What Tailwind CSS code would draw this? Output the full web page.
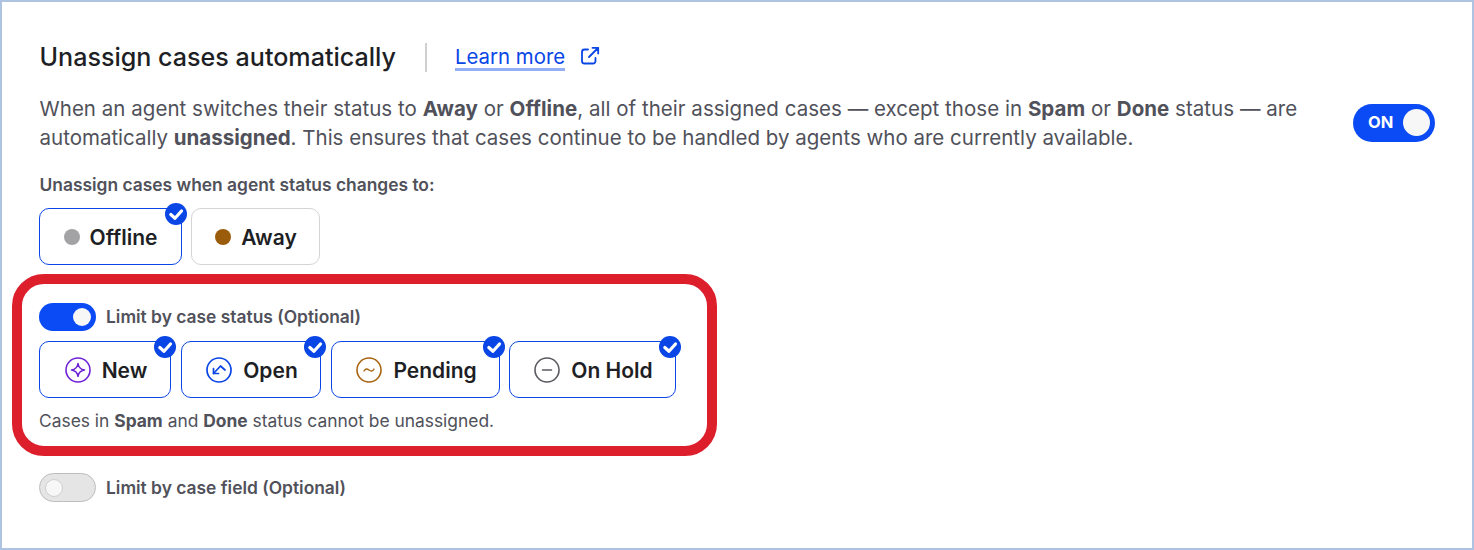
<!DOCTYPE html>
<html><head><meta charset="utf-8"><script src="https://cdn.jsdelivr.net/npm/@tailwindcss/browser@4"></script></head>
<body class="bg-white">
<div class="w-[1474px] h-[550px] border-2 border-[#aec3e1] bg-white overflow-hidden font-['Inter',sans-serif] text-[#50515a] relative">
  <div class="pl-[37.500px] pr-[37px] pt-[40px]">
    <div class="flex items-center h-[30px]">
      <h1 class="text-[25.100px] leading-[30px] font-medium text-[#1e1f25]">Unassign cases automatically</h1>
      <div class="w-[2px] h-[29px] bg-[#cfd0d2] ml-[29px]"></div>
      <a class="self-start mt-[3px] ml-[28px] text-[20.400px] leading-[23px] text-[#0a46e6] border-b-[3px] border-[#94aef5]">Learn more</a>
      <svg class="ml-[15px] -mt-[3px]" width="20" height="20" viewBox="0 0 20 20" fill="none" stroke="#0a46e6" stroke-width="1.800" stroke-linecap="round" stroke-linejoin="round"><path d="M8 3.500H4.500a2.500 2.500 0 0 0-2.500 2.500v9a2.500 2.500 0 0 0 2.500 2.500h8.500a2.500 2.500 0 0 0 2.500-2.500v-3"/><path d="M9 11 18 2M12.500 1.800h5.700v5.700"/></svg>
    </div>
    <div class="flex justify-between items-center mt-[22px]">
      <p class="text-[20.500px] leading-[29px] w-[1295px]"><span class="tracking-[0.03px]">When an agent switches their status to <b class="font-bold">Away</b> or <b class="font-bold">Offline</b>, all of their assigned cases — except those in <b class="font-bold">Spam</b> or <b class="font-bold">Done</b> status — are</span> automatically <b class="font-bold">unassigned</b>. This ensures that cases continue to be handled by agents who are currently available.</p>
      <div class="w-[82px] h-[38px] rounded-full bg-[#0a4bf5] flex items-center justify-between pl-[15px] pr-[5px] -mt-[1px]">
        <span class="text-[16.500px] font-bold text-white">ON</span>
        <span class="w-[27px] h-[27px] rounded-full bg-[#f7f7f8]"></span>
      </div>
    </div>
    <div class="text-[17.400px] leading-[20px] font-semibold mt-[23px]">Unassign cases when agent status changes to:</div>
    <div class="flex gap-[9px] mt-[13px] -ml-[0.500px]">
      <div class="relative w-[143px] h-[57px] rounded-[10px] border border-[#0a46e6] flex items-center justify-center gap-[10px] text-[#1e1f25] text-[21px] font-semibold">
        <span class="w-[16px] h-[16px] rounded-full bg-[#a3a3a6]"></span><span class="mt-[1.500px]">Offline</span>
        <svg class="absolute -right-[6px] -top-[6px]" width="22" height="22" viewBox="0 0 22 22"><circle cx="11" cy="11" r="11" fill="#0a46e6"/><path d="M5.800 11.500l4.200 3.800 6.500-7.300" fill="none" stroke="#fff" stroke-width="3.200" stroke-linecap="round" stroke-linejoin="round"/></svg>
      </div>
      <div class="w-[129px] h-[57px] rounded-[10px] border border-[#d4d4d6] flex items-center justify-center gap-[10px] pl-[1px] text-[#1e1f25] text-[21px] font-semibold">
        <span class="w-[16px] h-[16px] rounded-full bg-[#9a5c0b]"></span><span class="mt-[1.500px]">Away</span>
      </div>
    </div>
  </div>
  <div class="ml-[10px] mt-[9px] w-[705px] h-[182px] border-[10px] border-[#dc1f2b] rounded-[32px] pl-[17px] pt-[19px]">
    <div class="flex items-center gap-[10px] h-[28px]">
      <div class="w-[57px] h-[28px] rounded-full bg-[#0a4bf5] flex items-center justify-end pr-[5px]"><span class="w-[18px] h-[18px] rounded-full bg-[#f7f7f8]"></span></div>
      <span class="text-[17.400px] font-semibold">Limit by case status (Optional)</span>
    </div>
    <div class="flex mt-[10px]">
      <div class="relative w-[132px] h-[57px] rounded-[10px] border border-[#0a46e6] flex items-center justify-center gap-[11px] pl-[2px] text-[#1e1f25] text-[21px] font-semibold">
        <svg width="26" height="26" viewBox="0 0 26 26" fill="none" stroke="#6d22d8" stroke-width="1.600" stroke-linejoin="round"><circle cx="13" cy="13" r="12"/><path d="M13 6.500c.6 4.200 2.300 5.900 6.500 6.500-4.200.6-5.900 2.300-6.500 6.500-.6-4.200-2.300-5.900-6.500-6.500 4.200-.6 5.900-2.300 6.500-6.500z"/></svg><span class="mt-[1.500px]">New</span>
        <svg class="absolute -right-[6px] -top-[6px]" width="22" height="22" viewBox="0 0 22 22"><circle cx="11" cy="11" r="11" fill="#0a46e6"/><path d="M5.800 11.500l4.200 3.800 6.500-7.300" fill="none" stroke="#fff" stroke-width="3.200" stroke-linecap="round" stroke-linejoin="round"/></svg>
      </div>
      <div class="relative ml-[10px] w-[140px] h-[57px] rounded-[10px] border border-[#0a46e6] flex items-center justify-center gap-[11px] pl-[2px] text-[#1e1f25] text-[21px] font-semibold">
        <svg width="26" height="26" viewBox="0 0 26 26" fill="none" stroke="#0a46e6" stroke-width="1.700" stroke-linecap="round" stroke-linejoin="round"><circle cx="13" cy="13" r="12"/><path d="M7.500 11.500V16.500H12.500"/><path d="M7.500 16.500L14.500 9L19 13"/></svg><span class="mt-[1.500px]">Open</span>
        <svg class="absolute -right-[6px] -top-[6px]" width="22" height="22" viewBox="0 0 22 22"><circle cx="11" cy="11" r="11" fill="#0a46e6"/><path d="M5.800 11.500l4.200 3.800 6.500-7.300" fill="none" stroke="#fff" stroke-width="3.200" stroke-linecap="round" stroke-linejoin="round"/></svg>
      </div>
      <div class="relative ml-[10px] w-[169px] h-[57px] rounded-[10px] border border-[#0a46e6] flex items-center justify-center gap-[11px] pl-[2px] text-[#1e1f25] text-[21px] font-semibold">
        <svg width="26" height="26" viewBox="0 0 26 26" fill="none" stroke="#a8640f" stroke-width="1.600" stroke-linecap="round"><circle cx="13" cy="13" r="12"/><path d="M8 14c1.500-2.500 3-2.500 5-1s3.500 1.500 5-1" stroke-width="1.400"/></svg><span class="mt-[1.500px]">Pending</span>
        <svg class="absolute -right-[6px] -top-[6px]" width="22" height="22" viewBox="0 0 22 22"><circle cx="11" cy="11" r="11" fill="#0a46e6"/><path d="M5.800 11.500l4.200 3.800 6.500-7.300" fill="none" stroke="#fff" stroke-width="3.200" stroke-linecap="round" stroke-linejoin="round"/></svg>
      </div>
      <div class="relative ml-[9px] w-[167px] h-[57px] rounded-[10px] border border-[#0a46e6] flex items-center justify-center gap-[11px] pl-[2px] text-[#1e1f25] text-[21px] font-semibold">
        <svg width="26" height="26" viewBox="0 0 26 26" fill="none" stroke="#5a5b60" stroke-width="1.600" stroke-linecap="round"><circle cx="13" cy="13" r="12"/><path d="M8.500 13h9"/></svg><span class="mt-[1.500px]">On Hold</span>
        <svg class="absolute -right-[6px] -top-[6px]" width="22" height="22" viewBox="0 0 22 22"><circle cx="11" cy="11" r="11" fill="#0a46e6"/><path d="M5.800 11.500l4.200 3.800 6.500-7.300" fill="none" stroke="#fff" stroke-width="3.200" stroke-linecap="round" stroke-linejoin="round"/></svg>
      </div>
    </div>
    <p class="text-[17.400px] leading-[22px] mt-[12px]">Cases in <b class="font-bold">Spam</b> and <b class="font-bold">Done</b> status cannot be unassigned.</p>
  </div>
  <div class="flex items-center gap-[10px] h-[29px] ml-[37px] mt-[17px]">
    <div class="w-[57px] h-[29px] rounded-full bg-[#e5e5e6] border border-[#bdbdbf] flex items-center pl-[5px]"><span class="w-[18px] h-[18px] rounded-full bg-[#f7f7f8] border border-[#cfcfd1]"></span></div>
    <span class="text-[17.400px] font-semibold mt-[1px]">Limit by case field (Optional)</span>
  </div>
</div>
</body></html>
